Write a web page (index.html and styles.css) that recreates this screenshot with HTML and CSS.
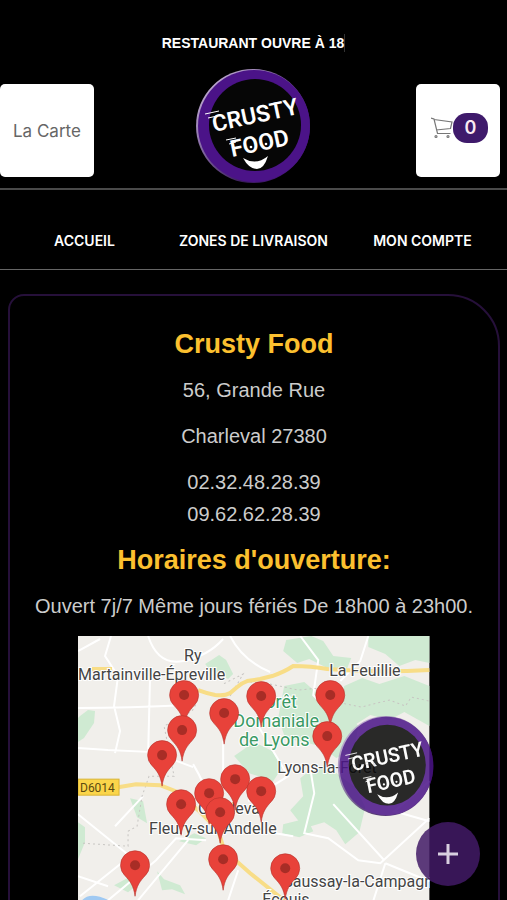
FILE: index.html
```html
<!DOCTYPE html>
<html lang="fr">
<head>
    <meta charset="UTF-8">
    <meta name="viewport" content="width=device-width, initial-scale=1.0">
    <title>Crusty Food</title>
    <link rel="stylesheet" href="styles.css">
</head>
<body>

    <!-- shared shapes: logo and map pin -->
    <svg class="defs" width="0" height="0" aria-hidden="true">
        <defs>
            <linearGradient id="rim" x1="0" y1="0" x2="1" y2="1">
                <stop offset="0" stop-color="#d9c8e6"/>
                <stop offset="0.35" stop-color="#8a6fa8"/>
                <stop offset="0.7" stop-color="#3a1c5c"/>
                <stop offset="1" stop-color="#4b1388"/>
            </linearGradient>
            <symbol id="logo" viewBox="0 0 117 116">
                <ellipse cx="58" cy="58" rx="57" ry="57" fill="url(#rim)"/>
                <ellipse cx="59" cy="58" rx="56" ry="56" fill="#4b1388"/>
                <ellipse cx="60" cy="57" rx="46" ry="46" fill="#060606"/>
                <path d="M10 46l14-3M13 50l9-2M31 72l10-2M34 76l7-2" stroke="#fff" stroke-width="1" fill="none"/>
                <text class="logo-text" transform="translate(19 64) rotate(-12)">CRUSTY</text>
                <text class="logo-text" transform="translate(37 89) rotate(-12)">FOOD</text>
                <circle cx="56" cy="79" r="1.3" fill="#fff"/>
                <circle cx="71" cy="76" r="1.3" fill="#fff"/>
                <path d="M48 90q13 8 25-2q-4 13-11 13q-8 0-14-11z" fill="#fff"/>
            </symbol>
            <g id="pin">
                <path d="M0 31C-1.500 20-5 16-10 10.500A14.500 14.500 0 1 1 10 10.500C5 16 1.500 20 0 31z" fill="#e8423a" stroke="#b5332c" stroke-width="0.600"/>
                <circle r="5" fill="#a82d26"/>
            </g>
        </defs>
    </svg>

    <div class="page">
        <div class="announce"><span>RESTAURANT OUVRE À 18</span></div>

        <header class="header">
            <a class="card card-menu" href="#carte">La Carte</a>
            <a class="logo" href="#" aria-label="Crusty Food">
                <svg width="117" height="116"><use href="#logo"/></svg>
            </a>
            <button class="card card-cart" aria-label="Panier">
                <svg width="22" height="22" viewBox="0 0 22 22" fill="none" stroke="#777" stroke-width="1.200">
                    <path d="M0 1l3 1l3.500 14.500H19.500M3 2.500L21 5l-1.500 6.500L5 13"/>
                    <circle cx="5" cy="19.500" r="1"/>
                    <circle cx="17" cy="19.500" r="1"/>
                </svg>
                <span class="badge">0</span>
            </button>
        </header>

        <nav class="nav">
            <a href="#">ACCUEIL</a>
            <a href="#zones">ZONES DE LIVRAISON</a>
            <a href="#compte">MON COMPTE</a>
        </nav>

        <main class="panel">
            <h2>Crusty Food</h2>
            <p>56, Grande Rue</p>
            <p>Charleval 27380</p>
            <p>02.32.48.28.39<br>09.62.62.28.39</p>
            <h2>Horaires d'ouverture:</h2>
            <p>Ouvert 7j/7 Même jours fériés De 18h00 à 23h00.</p>

            <svg class="map" viewBox="0 0 351 351" role="img" aria-label="Zones de livraison">
                <rect width="351" height="351" fill="#f1efeb"/>
                <!-- forests -->
                <g fill="#cfead2">
                    <path d="M127 28l14-9l7 5l7 14l-5 5l-17-8z"/>
                    <path d="M2 80l8-6l7 1l-1 12l-10 15l-6 4V82z"/>
                    <path d="M208 4l25-4l12 5l10 15l18 2l-4 10h-20l-18-9l-12 4l-14-12z"/>
                    <path d="M290 0h61v27l-14-3l-16 6l-14-12l-17-7z"/>
                    <path d="M266 50l18-8l17 6l25-8l25 10v40l-25-14l-15 8l-19-5l-14 9l-20-14z"/>
                    <path d="M206 50l20-4l14 12l22 10l18 22l-4 24l-18 8l-16-12l-35-8l-7-20z"/>
                    <path d="M156 120l20-14l18 9l10 16l-9 14l-24-8z"/>
                    <path d="M222 142l15-12l20 6l20 15l10 20l-6 25l-14 12l-9-14l-12-8l-20 6l-14-18l13-14z"/>
                    <path d="M205 188l24-6l6 13l-14 6l-17-4z"/>
                    <path d="M52 162l13 3l4 22l-10-6z"/>
                    <path d="M101 205l15-8l12 5l-10 7z"/>
                    <path d="M36 249l15-8l8 8l-9 7z"/>
                    <path d="M79 235l7 8l16 6l5 9l-13-5l-10 1z"/>
                    <path d="M0 186l7 5v15l-7 17z"/>
                </g>
                <path d="M4 264q8-9 27 0z" fill="#9fc9f2"/>
                <!-- small roads -->
                <g fill="none" stroke="#fff" stroke-width="2">
                    <path d="M0 15l22-12M0 72q50 0 110-3M33 0l-6 20l13 20l-4 30l6 25l-5 22M0 112l30 2l45 2l40 15M72 40l-2 80"/>
                    <path d="M70 0q10 30 35 25t40-22M115 128q12 20 17 40M65 160l-28 30M0 178l52 42l-50 40M30 264l48-40l20-22l30 2M60 264l50-60"/>
                    <path d="M152 0q12 24 40 36M145 105v40M222 0l18 24l-5 35l20 20M290 0l-8 25l-20 20M232 132l4 25l-10 40l24 5l30 22l22 3l49-45M215 200l-30-5M255 168l50 55M307 227l44 18M307 227l-16 50M150 264l10-30M0 240l30 10M180 90l30 50l-40 25M351 145l-35 30l35 10"/>
                </g>
                <g fill="none" stroke="#c7c5c2" stroke-width="1" stroke-dasharray="2 3">
                    <path d="M5 207l45 3v-15l9-5l5-30l7-20h25l-10-50l28-15l5-9M152 60l13-22l-20 10"/>
                    <path d="M172 46l20 2l28 6l22-2l16 14l25 5l28-7l16 6l6-9l18 4"/>
                </g>
                <!-- main roads -->
                <g fill="none" stroke="#f8dd87" stroke-width="4">
                    <path d="M14 33h20M120 54q8 3 17 5q10 1 15-2l7-6q4-4 10-6l13-2l12-3q12-4 21-10q18 0 34 3q50 4 102 1"/>
                    <path d="M40 151l18-3l24 1l18 7l20 18l20 20l6 20l26 23l40 32"/>
                </g>
                <rect x="0" y="143" width="41" height="16" fill="#fbd54a" stroke="#d9b435"/>
                <text x="2" y="156" class="map-road">D6014</text>
                <g class="map-label">
                    <text x="106" y="25">Ry</text>
                    <text x="0" y="44">Martainville-Épreville</text>
                    <text x="251" y="40">La Feuillie</text>
                    <text x="199" y="137">Lyons-la-Forêt</text>
                    <text x="120" y="178">Charleval</text>
                    <text x="71" y="198">Fleury-sur-Andelle</text>
                    <text x="205" y="251">Saussay-la-Campagne</text>
                    <text x="184" y="269">Écouis</text>
                </g>
                <g class="map-forest">
                    <text x="198" y="72">Forêt</text>
                    <text x="198" y="91">Domaniale</text>
                    <text x="196" y="110">de Lyons</text>
                </g>
                <use href="#pin" x="106" y="59"/>
                <use href="#pin" x="104" y="94"/>
                <use href="#pin" x="84" y="119"/>
                <use href="#pin" x="146" y="77"/>
                <use href="#pin" x="183" y="60"/>
                <use href="#pin" x="252" y="59"/>
                <use href="#pin" x="249" y="100"/>
                <use href="#pin" x="157" y="143"/>
                <use href="#pin" x="131" y="157"/>
                <use href="#pin" x="183" y="155"/>
                <use href="#pin" x="103" y="168"/>
                <use href="#pin" x="142" y="176"/>
                <use href="#pin" x="145" y="223"/>
                <use href="#pin" x="57" y="229"/>
                <use href="#pin" x="207" y="232"/>
            </svg>
        </main>
    </div>

    <a class="float-logo" href="#" aria-label="Crusty Food">
        <svg width="98" height="102" viewBox="0 0 117 116" preserveAspectRatio="none"><use href="#logo"/></svg>
    </a>
    <button class="fab" aria-label="Plus">
        <svg width="20" height="20" viewBox="0 0 20 20" stroke="#d8cfe0" stroke-width="3"><path d="M10 0v20M0 10h20"/></svg>
    </button>

</body>
</html>
```
FILE: styles.css
```css
* { margin: 0; padding: 0; box-sizing: border-box; }
body { background: #000; color: #fff; font-family: "Liberation Sans", Arial, sans-serif; }
a { color: inherit; text-decoration: none; }
button { border: none; cursor: pointer; font: inherit; }
svg { display: block; }
.defs { position: absolute; }
.page { height: 100vh; overflow-y: auto; scrollbar-width: none; }

.announce { padding: 34px 0 16px; text-align: center; font-size: 14px; line-height: 18px; font-weight: bold; }
.announce span { display: inline-block; border-right: 1px solid #333; }

.header { display: grid; grid-template-columns: 1fr auto 1fr; align-items: start; padding-bottom: 4px; border-bottom: 2px solid #4a4a4a; }
.card { display: flex; align-items: center; height: 93px; margin-top: 16px; background: #fff; border-radius: 5px; }
.card-menu { justify-self: start; padding: 0 13px; color: #666; font-family: Inter, sans-serif; font-size: 17px; }
.card-cart { justify-self: end; margin-right: 7px; padding: 0 12px 6px 15px; }
.badge { width: 35px; height: 30px; border-radius: 14px; background: #3f1a6b; color: #fbeaf2; font-family: Inter, sans-serif; font-size: 18px; line-height: 30px; font-weight: 600; text-align: center; }
.logo-text { font-family: Roboto, sans-serif; font-size: 23px; font-weight: 600; fill: #fff; }

.nav { display: grid; grid-template-columns: repeat(3, 1fr); padding: 42px 0 19px; border-bottom: 1px solid #666; text-align: center; font-family: Inter, sans-serif; font-size: 14px; line-height: 18px; font-weight: 600; }

.panel { margin: 24px 7px 0 8px; padding: 32px 0 40px; border: 2px solid #26103a; border-radius: 16px 52px 16px 16px; text-align: center; }
.panel h2 { margin-bottom: 14px; color: #fcc02f; font-size: 27px; line-height: 32px; }
.panel p { margin-bottom: 14px; color: #ccc; font-size: 20px; line-height: 32px; }

.map { width: 72%; margin: 0 auto; }
.map-label { font-family: Roboto, sans-serif; font-size: 16px; fill: #444; stroke: #fff; stroke-width: 2px; paint-order: stroke; }
.map-forest { font-family: Roboto, sans-serif; font-size: 18px; fill: #3a9a64; text-anchor: middle; stroke: #fff; stroke-width: 2px; paint-order: stroke; }
.map-road { font-family: Roboto, sans-serif; font-size: 12px; fill: #5c4a10; }

.float-logo { position: fixed; right: 72px; bottom: 83px; opacity: 0.85; }
.fab { position: fixed; right: 27px; bottom: 14px; display: flex; align-items: center; justify-content: center; width: 64px; height: 64px; border-radius: 50%; background: rgba(66, 26, 102, 0.85); }
```
